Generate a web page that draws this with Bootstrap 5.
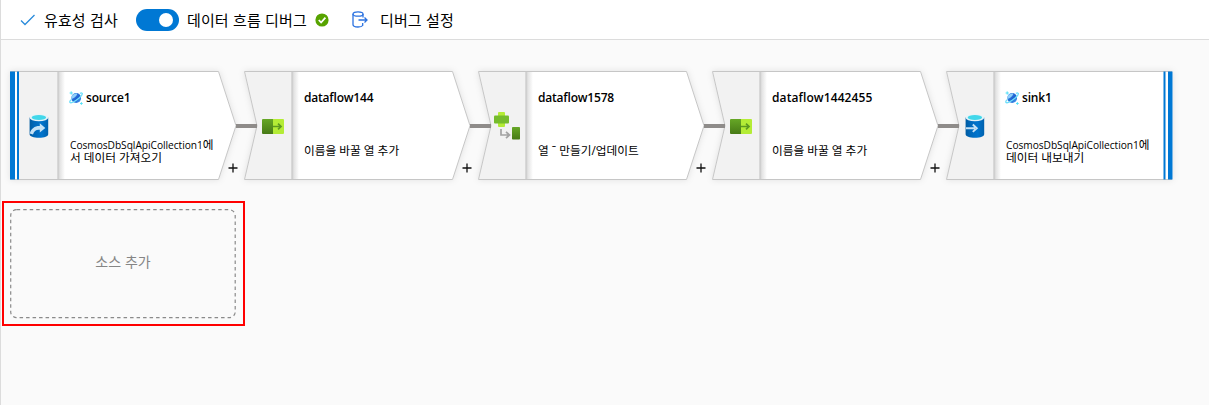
<!DOCTYPE html>
<html lang="ko">
<head>
<meta charset="utf-8">
<title>데이터 흐름</title>
<link href="https://cdn.jsdelivr.net/npm/bootstrap@5.3.0/dist/css/bootstrap.min.css" rel="stylesheet">
<style>
body{font-family:"Open Sans","Noto Sans CJK KR",sans-serif;color:#000;background:#fafafa;height:405px;overflow:hidden;border-left:1px solid #dcdcdc}
.toolbar{height:40px;border-bottom:1px solid #dcdcdc;font-family:"Noto Sans CJK KR",sans-serif;font-size:15px;line-height:20px;padding-left:19px;white-space:nowrap;letter-spacing:.1px}
.toggle{width:43px;height:22px;border-radius:11px;background:#0078d4;padding:0 6px 0 0}
.knob{width:14px;height:14px;border-radius:50%;background:#fff}
.canvas{padding:31px 0 0 9px}
.flow{gap:8px}
.step{width:226px;height:110px}
.step svg{display:block;flex:none}
.shape{left:0;top:0;overflow:visible;filter:drop-shadow(0 0 3px rgba(0,0,0,.1))}
.side{width:48px;height:110px}
.copy{padding:18px 0 0 12px;white-space:nowrap}
.title{font-size:12px;line-height:18px;height:18px;font-weight:600;gap:3px;letter-spacing:-.2px}
.wide{letter-spacing:.1px}
.desc{height:36px;margin-top:25px;font-size:11.7px;line-height:12px}
.latin{font-size:10.2px;letter-spacing:-.04px}
.link{left:226px;top:53px;width:21px;height:4px;background:#8f8c8a;z-index:2}
.plus{left:218px;top:92px;z-index:2}
.marked{width:243px;height:125px;border:2px solid #f00;margin:20px 0 0 -8px;padding:6px 5px 0 6px}
.add{width:226px;height:110px;font-size:14px;color:#858585;font-family:"Noto Sans CJK KR",sans-serif;padding:0 0 6px 0}
.add svg{left:0;top:0}
</style>
<script src="https://cdn.jsdelivr.net/npm/bootstrap@5.3.0/dist/js/bootstrap.bundle.min.js"></script>
</head>
<body>
<svg width="0" height="0" class="position-absolute">
<defs>
<linearGradient id="shade"><stop offset="0" stop-color="#cfcfcf"/><stop offset=".3" stop-color="#e4e4e4"/><stop offset="1" stop-color="#fff"/></linearGradient>
<linearGradient id="cyl"><stop offset="0" stop-color="#005ba1"/><stop offset=".25" stop-color="#0068ba"/><stop offset=".65" stop-color="#0074cd"/><stop offset="1" stop-color="#0061ad"/></linearGradient>
<linearGradient id="leaf" x2="0" y2="1"><stop offset="0" stop-color="#66a726"/><stop offset="1" stop-color="#477a16"/></linearGradient>
<linearGradient id="ball" x2="1" y2="1"><stop offset="0" stop-color="#4a9bf0"/><stop offset=".55" stop-color="#1d5fd0"/><stop offset="1" stop-color="#55a8f5"/></linearGradient>
<symbol id="mid" viewBox="0 0 226 110"><path d="M.5 .5H208.5L226 54.7L208.5 108.5H.5L13 54.7Z" fill="#fff"/><path d="M.5 .5H48V108.5H.5L13 54.7Z" fill="#f2f2f2"/><path d="M48 1h7v107h-7z" fill="url(#shade)"/><path d="M48 .5V108.5" stroke="#cdcdcd" stroke-width="1.4"/><path d="M.5 .5H208.5L226 54.7L208.5 108.5H.5L13 54.7Z" fill="none" stroke="#c6c6c6"/></symbol>
<symbol id="globe" viewBox="0 0 14 14"><circle cx="7.2" cy="7" r="4.9" fill="url(#ball)"/><path d="M2.600 5.200C4 3 6 2.300 8 2.400 8.500 4 6.500 5.200 5.500 6.500 4.500 7.500 3 7.500 2.400 8Z" fill="#8fd0fa"/><path d="M10.800 2.300C14.600 1 14 3.800 10.200 7 6.200 10.300 1 13.200 .7 11c0-.8.8-1.700 1.800-2.500" fill="none" stroke="#6fdffa" stroke-width="1.300"/><path d="M2.200 .4v3.200M.6 2h3.200M12.400 11.200v2.600M11.100 12.500h2.600" stroke="#50e0f7" stroke-width="1"/></symbol>
<symbol id="db" viewBox="0 0 20 24"><path d="M.6 3.500V20.200C.6 22.200 4.500 23.700 10 23.700S19.200 22.200 19.200 20.200V3.500Z" fill="url(#cyl)"/><ellipse cx="9.900" cy="3.800" rx="9.300" ry="3.500" fill="#e4f3f8"/><ellipse cx="9.900" cy="3.500" rx="7.200" ry="2.400" fill="#42d7ea"/></symbol>
<symbol id="pick" viewBox="0 0 22 15"><path d="M0 1q0-1 1-1h10v15H1q-1 0-1-1z" fill="url(#leaf)"/><path d="M11 0h10q1 0 1 1v13q0 1-1 1H11z" fill="#b4ec36"/><path d="M11 7.500h8M16 4.700l3 2.800-3 2.800" fill="none" stroke="#5d9a20" stroke-width="1.700"/></symbol>
<symbol id="add" viewBox="0 0 10 10"><path d="M5 .5v9M.5 5h9" stroke="#111" stroke-width="1.300"/></symbol>
</defs>
</svg>

<nav class="toolbar d-flex align-items-center bg-white">
  <svg width="16" height="12" viewBox="0 0 16 12"><path d="M1 6.500l4 4L14.500 1" fill="none" stroke="#2a8bdb" stroke-width="1.300"/></svg>
  <span style="margin-left:8px;width:92px">유효성 검사</span>
  <div class="toggle d-flex align-items-center justify-content-end"><span class="knob"></span></div>
  <span style="margin-left:8px;width:128px">데이터 흐름 디버그</span>
  <svg width="14" height="14" viewBox="0 0 14 14"><circle cx="7" cy="7" r="6.600" fill="#57a300"/><path d="M3.800 7l2.300 2.500 4.300-4.800" fill="none" stroke="#fff" stroke-width="1.800"/></svg>
  <svg width="16" height="17" viewBox="0 0 16 17" style="margin-left:23px"><g fill="none" stroke="#2b72e0" stroke-width="1.300"><ellipse cx="6" cy="3" rx="5" ry="2.200"/><path d="M1 3v10.500c0 1.500 2 2.500 5 2.500 2.200 0 4-.5 4.700-1.500v-2.500M11 3v3.500M6.500 9h8.500M12.500 6.500L15 9l-2.500 2.500"/></g></svg>
  <span style="margin-left:12px">디버그 설정</span>
</nav>

<main class="canvas">
<div class="flow d-flex">
  <section class="step position-relative">
    <svg class="shape position-absolute" width="226" height="110"><path d="M.5 .5H208.500L226 54.700L208.500 108.500H.5Z" fill="#fff"/><path d="M7 .5H48V108.500H7Z" fill="#f2f2f2"/><path d="M48 1h7v107h-7z" fill="url(#shade)"/><path d="M48 .5V108.500" stroke="#cdcdcd" stroke-width="1.400"/><path d="M.5 .5H208.500L226 54.700L208.500 108.500H.5Z" fill="none" stroke="#c6c6c6"/><path d="M0 .5h5v108H0zM7 .5h2v108H7z" fill="#0078d4"/><path d="M5 1h2v107H5z" fill="#fff"/></svg>
    <div class="position-relative d-flex">
      <div class="side d-flex align-items-center justify-content-end" style="padding-right:9px"><svg width="20" height="24" viewBox="0 0 20 24"><use href="#db"/><path d="M.8 19.500C2 14.500 6 11.800 10.800 12V9.300l5.500 4.700-5.500 4.500v-2.700C7 15.500 5 17 4 20.500z" fill="#c4e1f5"/></svg></div>
      <div class="copy"><div class="title d-flex align-items-center" style="margin-left:-1px"><svg width="14" height="14"><use href="#globe"/></svg><span>source1</span></div><div class="desc d-flex align-items-center"><span><span class="latin">CosmosDbSqlApiCollection1</span>에<br>서 데이터 가져오기</span></div></div>
    </div>
    <span class="link position-absolute"></span><svg class="plus position-absolute" width="10" height="10"><use href="#add"/></svg>
  </section>
  <section class="step position-relative">
    <svg class="shape position-absolute" width="226" height="110"><use href="#mid"/></svg>
    <div class="position-relative d-flex">
      <div class="side d-flex align-items-center justify-content-end pe-2"><svg width="22" height="15"><use href="#pick"/></svg></div>
      <div class="copy"><div class="title d-flex align-items-center"><span>dataflow144</span></div><div class="desc d-flex align-items-center"><span>이름을 바꿀 열 추가</span></div></div>
    </div>
    <span class="link position-absolute"></span><svg class="plus position-absolute" width="10" height="10"><use href="#add"/></svg>
  </section>
  <section class="step position-relative">
    <svg class="shape position-absolute" width="226" height="110"><use href="#mid"/></svg>
    <div class="position-relative d-flex">
      <div class="side d-flex align-items-center justify-content-end" style="padding-right:6px"><svg width="26" height="28" viewBox="0 0 26 28"><rect x="4" width="7" height="15" rx="1" fill="#b4ec36"/><rect y="3.500" width="15" height="8" rx="1" fill="#76bc2d"/><rect x="18" y="15" width="8" height="12.500" rx=".8" fill="url(#leaf)"/><path d="M7 17v6h8M12 19.800l3.500 3.200-3.500 3.200" fill="none" stroke="#a3a3a3" stroke-width="1.700"/></svg></div>
      <div class="copy"><div class="title d-flex align-items-center"><span>dataflow1578</span></div><div class="desc d-flex align-items-center"><span>열 ˉ 만들기/업데이트</span></div></div>
    </div>
    <span class="link position-absolute"></span><svg class="plus position-absolute" width="10" height="10"><use href="#add"/></svg>
  </section>
  <section class="step position-relative">
    <svg class="shape position-absolute" width="226" height="110"><use href="#mid"/></svg>
    <div class="position-relative d-flex">
      <div class="side d-flex align-items-center justify-content-end pe-2"><svg width="22" height="15"><use href="#pick"/></svg></div>
      <div class="copy"><div class="title wide d-flex align-items-center"><span>dataflow1442455</span></div><div class="desc d-flex align-items-center"><span>이름을 바꿀 열 추가</span></div></div>
    </div>
    <span class="link position-absolute"></span><svg class="plus position-absolute" width="10" height="10"><use href="#add"/></svg>
  </section>
  <section class="step position-relative">
    <svg class="shape position-absolute" width="227" height="110"><path d="M.5 .5H226.500V108.500H.5L13 54.700Z" fill="#fff"/><path d="M.5 .5H48V108.500H.5L13 54.700Z" fill="#f2f2f2"/><path d="M48 1h7v107h-7z" fill="url(#shade)"/><path d="M48 .5V108.500" stroke="#cdcdcd" stroke-width="1.400"/><path d="M226 .5H.5L13 54.700L.5 108.500H226" fill="none" stroke="#c6c6c6"/><path d="M217.500 .5h2v108h-2zM222 .5h4.500v108H222z" fill="#0078d4"/></svg>
    <div class="position-relative d-flex">
      <div class="side d-flex align-items-center justify-content-end" style="padding-right:9px"><svg width="20" height="24" viewBox="0 0 20 24"><use href="#db"/><path d="M1 14.200h9M7.800 10.500l4 3.700-4 3.700" fill="none" stroke="#c4e1f5" stroke-width="1.900"/></svg></div>
      <div class="copy"><div class="title d-flex align-items-center" style="margin-left:-1px"><svg width="14" height="14"><use href="#globe"/></svg><span>sink1</span></div><div class="desc d-flex align-items-center"><span><span class="latin">CosmosDbSqlApiCollection1</span>에<br>데이터 내보내기</span></div></div>
    </div>
  </section>
</div>
<div class="marked">
  <div class="add position-relative d-flex align-items-center justify-content-center"><svg class="position-absolute" width="226" height="110"><rect x=".7" y=".7" width="224.500" height="108" rx="6" fill="none" stroke="#8a8a8a" stroke-width="1.200" stroke-dasharray="3.500 3"/></svg><span>소스 추가</span></div>
</div>
</main>
</body>
</html>
